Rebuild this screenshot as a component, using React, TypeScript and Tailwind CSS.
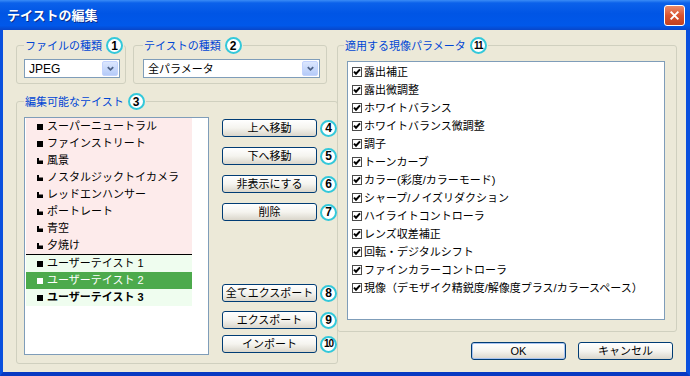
import type { ReactNode } from 'react'

const presets = [
  { label: 'スーパーニュートラル', mark: 'square' },
  { label: 'ファインストリート', mark: 'square' },
  { label: '風景', mark: 'corner' },
  { label: 'ノスタルジックトイカメラ', mark: 'corner' },
  { label: 'レッドエンハンサー', mark: 'corner' },
  { label: 'ポートレート', mark: 'corner' },
  { label: '青空', mark: 'corner' },
  { label: '夕焼け', mark: 'corner' },
]

const params = [
  '露出補正',
  '露出微調整',
  'ホワイトバランス',
  'ホワイトバランス微調整',
  '調子',
  'トーンカーブ',
  'カラー(彩度/カラーモード)',
  'シャープ/ノイズリダクション',
  'ハイライトコントローラ',
  'レンズ収差補正',
  '回転・デジタルシフト',
  'ファインカラーコントローラ',
  '現像（デモザイク精鋭度/解像度プラス/カラースペース）',
]

function Badge({ n }: { n: string }) {
  const wide = n.length > 1
  return (
    <span
      className={`flex h-[17px] w-[17px] shrink-0 items-center justify-center rounded-full border-2 border-[#33C8DA] bg-white font-['Liberation_Sans',sans-serif] font-bold leading-none text-black ${
        wide ? 'text-[10px] tracking-[-1px]' : 'text-[12px]'
      }`}
    >
      {n}
    </span>
  )
}

function Legend({ label, n }: { label: string; n: string }) {
  return (
    <legend className="px-[1px]">
      <span className="flex items-center gap-[4px]">
        <span className="text-[11px] leading-[14px] text-[#0046D5]">{label}</span>
        <Badge n={n} />
      </span>
    </legend>
  )
}

function Combo({ value, className = '', latin = false }: { value: string; className?: string; latin?: boolean }) {
  return (
    <div className={`flex h-[19px] items-center border border-[#7F9DB9] bg-white p-px ${className}`}>
      <span className={`flex-1 pl-[3px] leading-[16px] text-black ${latin ? 'text-[12px]' : 'text-[11px]'}`}>{value}</span>
      <span className="flex h-[15px] w-[16px] items-center justify-center rounded-[2px] border border-[#C3D3FD] bg-linear-to-b from-[#DCE7FE] to-[#B5CBF8]">
        <svg viewBox="0 0 10 10" className="h-[9px] w-[9px]" fill="none" stroke="#4D6185" strokeWidth={2}>
          <path d="M2 3.5l3 3 3-3" />
        </svg>
      </span>
    </div>
  )
}

function XpButton({ children, focused = false }: { children: ReactNode; focused?: boolean }) {
  return (
    <button
      className={`flex h-[18px] w-[95px] shrink-0 items-center justify-center rounded-[3px] border border-[#003C74] bg-linear-to-b from-white via-[#F5F4EF] to-[#DAD6CB] text-[11px] leading-none text-black ${
        focused ? 'shadow-[inset_0_0_0_1px_#A9C4F1]' : ''
      }`}
    >
      {children}
    </button>
  )
}

function ButtonRow({ label, n, className = '' }: { label: string; n: string; className?: string }) {
  return (
    <div className={`flex items-center gap-[3px] ${className}`}>
      <XpButton>{label}</XpButton>
      <Badge n={n} />
    </div>
  )
}

function Mark({ kind, light }: { kind: string; light?: boolean }) {
  const fill = light ? '#FFFFFF' : '#000000'
  return (
    <svg viewBox="0 0 6 6" className="h-[6px] w-[6px] shrink-0">
      {kind === 'square' ? <rect x="0" y="0" width="6" height="6" fill={fill} /> : <path d="M0 0h2v2.5h4V6H0z" fill={fill} />}
    </svg>
  )
}

function Row({ label, kind, tone }: { label: string; kind: string; tone: 'pink' | 'green' | 'sel' | 'bold' }) {
  const bg =
    tone === 'pink' ? 'bg-[#FDEBEB] text-black' : tone === 'sel' ? 'bg-[#4CAA4C] text-white' : 'bg-[#EFFDEF] text-black'
  return (
    <div className={`ml-px flex h-[17px] w-[166px] items-center gap-[4px] pl-[11px] ${bg}`}>
      <Mark kind={kind} light={tone === 'sel'} />
      <span className={`text-[11px] leading-[17px] ${tone === 'bold' ? 'font-bold' : ''}`}>{label}</span>
    </div>
  )
}

function Check({ label }: { label: string }) {
  return (
    <div className="flex h-[18px] items-center gap-[2px] pl-[4px]">
      <span className="flex h-[10px] w-[10px] shrink-0 items-center justify-center border border-[#4A4A4A] bg-white">
        <svg viewBox="0 0 8 8" className="h-[8px] w-[8px]" fill="none" stroke="#000" strokeWidth={2}>
          <path d="M1 3.6l2 2.1 4-4.4" />
        </svg>
      </span>
      <span className="text-[11px] leading-[18px] text-black">{label}</span>
    </div>
  )
}

export default function App() {
  return (
    <div className="flex h-[376px] w-[690px] flex-col font-['Liberation_Sans','Noto_Sans_CJK_JP',sans-serif]">
      {/* Title bar */}
      <div className="flex h-[30px] items-center justify-between bg-[linear-gradient(to_bottom,#3A8CF6_0%,#0B61EA_10%,#0055E5_45%,#0058EA_85%,#0846C9_100%)] pl-[7px] pr-[5px]">
        <span className="text-[13px] font-bold leading-none text-white [text-shadow:1px_1px_0_#0A2E8C]">テイストの編集</span>
        <span className="flex h-[21px] w-[21px] items-center justify-center rounded-[3px] border border-white bg-linear-to-b from-[#E98A6A] via-[#D9532F] to-[#C2411F]">
          <svg viewBox="0 0 10 10" className="h-[11px] w-[11px]" fill="none" stroke="#fff" strokeWidth={1.8}>
            <path d="M1.5 1.5l7 7M8.5 1.5l-7 7" />
          </svg>
        </span>
      </div>

      {/* Body */}
      <div className="flex flex-1 border-b-[4px] border-l-[3px] border-r-[4px] border-[#0A50DE] border-b-[#0839C2] bg-[#ECE9D8] pl-[13px] pt-[7px]">
        {/* Left column */}
        <div className="flex w-[311px] flex-col">
          <div className="flex gap-[7px]">
            <fieldset className="w-[110px] rounded-[3px] border border-[#D0D0BF] pb-[5px] pl-[7px]">
              <Legend label="ファイルの種類" n="1" />
              <Combo value="JPEG" latin className="mt-[5px] w-[96px]" />
            </fieldset>
            <fieldset className="w-[194px] rounded-[3px] border border-[#D0D0BF] pb-[5px] pl-[9px]">
              <Legend label="テイストの種類" n="2" />
              <Combo value="全パラメータ" className="mt-[5px] w-[177px]" />
            </fieldset>
          </div>

          <fieldset className="mt-[9px] w-[311px] rounded-[3px] border border-[#D0D0BF] pb-[8px] pl-[7px]">
            <Legend label="編集可能なテイスト" n="3" />
            <div className="mt-[7px] flex">
              <div className="h-[238px] w-[185px] border border-[#7F9DB9] bg-white">
                {presets.map((p) => (
                  <Row key={p.label} label={p.label} kind={p.mark} tone="pink" />
                ))}
                <div className="ml-px h-px w-[166px] bg-black" />
                <Row label="ユーザーテイスト 1" kind="square" tone="green" />
                <Row label="ユーザーテイスト 2" kind="square" tone="sel" />
                <Row label="ユーザーテイスト 3" kind="square" tone="bold" />
              </div>
              <div className="ml-[13px] flex h-[238px] flex-col">
                <ButtonRow label="上へ移動" n="4" className="mt-[2px]" />
                <ButtonRow label="下へ移動" n="5" className="mt-[10px]" />
                <ButtonRow label="非表示にする" n="6" className="mt-[10px]" />
                <ButtonRow label="削除" n="7" className="mt-[10px]" />
                <ButtonRow label="全てエクスポート" n="8" className="mt-auto" />
                <ButtonRow label="エクスポート" n="9" className="mt-[9px]" />
                <ButtonRow label="インポート" n="10" className="mb-[2px] mt-[6px]" />
              </div>
            </div>
          </fieldset>
        </div>

        {/* Right column */}
        <div className="ml-[10px] flex w-[340px] flex-col">
          <fieldset className="rounded-[3px] border border-[#D0D0BF] pb-[11px] pl-[6px]">
            <Legend label="適用する現像パラメータ" n="11" />
            <div className="ml-[3px] mt-[7px] h-[259px] w-[318px] border border-[#7F9DB9] bg-white pt-px">
              {params.map((p) => (
                <Check key={p} label={p} />
              ))}
            </div>
          </fieldset>
          <div className="mt-[10px] flex justify-end gap-[12px] pr-[4px]">
            <XpButton focused>OK</XpButton>
            <XpButton>キャンセル</XpButton>
          </div>
        </div>
      </div>
    </div>
  )
}
